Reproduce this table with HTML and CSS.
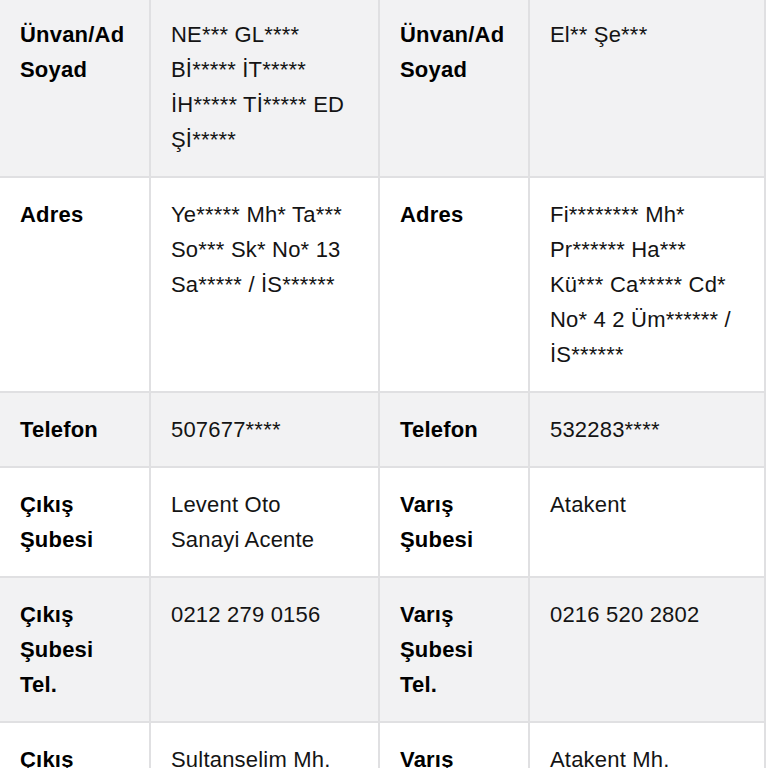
FILE: index.html
```html
<!DOCTYPE html>
<html lang="tr">
<head>
<meta charset="utf-8">
<title>Gönderi Bilgileri</title>
<link rel="stylesheet" href="styles.css">
</head>
<body>
<table class="info">
  <colgroup>
    <col class="c1"><col class="c2"><col class="c3"><col class="c4">
  </colgroup>
  <tbody>
    <tr class="odd">
      <th>Ünvan/Ad Soyad</th>
      <td>NE*** GL****<br>Bİ***** İT*****<br>İH***** Tİ***** ED<br>Şİ*****</td>
      <th>Ünvan/Ad Soyad</th>
      <td>El** Şe***</td>
    </tr>
    <tr>
      <th>Adres</th>
      <td>Ye***** Mh* Ta***<br>So*** Sk* No* 13<br>Sa***** / İS******</td>
      <th>Adres</th>
      <td>Fi******** Mh*<br>Pr****** Ha***<br>Kü*** Ca***** Cd*<br>No* 4 2 Üm****** /<br>İS******</td>
    </tr>
    <tr class="odd">
      <th>Telefon</th>
      <td>507677****</td>
      <th>Telefon</th>
      <td>532283****</td>
    </tr>
    <tr>
      <th>Çıkış Şubesi</th>
      <td>Levent Oto<br>Sanayi Acente</td>
      <th>Varış Şubesi</th>
      <td>Atakent</td>
    </tr>
    <tr class="odd">
      <th>Çıkış Şubesi Tel.</th>
      <td>0212 279 0156</td>
      <th>Varış Şubesi Tel.</th>
      <td>0216 520 2802</td>
    </tr>
    <tr>
      <th>Çıkış Şubesi Adresi</th>
      <td>Sultanselim Mh.<br>Levent Oto Sanayi</td>
      <th>Varış Şubesi Adresi</th>
      <td>Atakent Mh.<br>Ümraniye</td>
    </tr>
  </tbody>
</table>
</body>
</html>
```

FILE: styles.css
```css
html, body {
  margin: 0;
  padding: 0;
  background: #ffffff;
}

body {
  overflow: hidden;
  font-family: "Liberation Sans", Arial, Helvetica, sans-serif;
  color: #111111;
}

.info {
  width: 768px;
  margin: -4px 0 0 -2px;
  border-collapse: collapse;
  table-layout: fixed;
  font-size: 22px;
  line-height: 35px;
  letter-spacing: 0.2px;
}

.c1 { width: 151px; }
.c2 { width: 229px; }
.c3 { width: 150px; }
.c4 { width: 236px; }

.info th,
.info td {
  border: 2px solid #e0e0e2;
  padding: 19px 20px;
  vertical-align: top;
  text-align: left;
}

.info th {
  font-weight: bold;
  color: #000000;
}

.info td {
  font-weight: normal;
  color: #141414;
}

.info tr.odd {
  background: #f2f2f3;
}
```
